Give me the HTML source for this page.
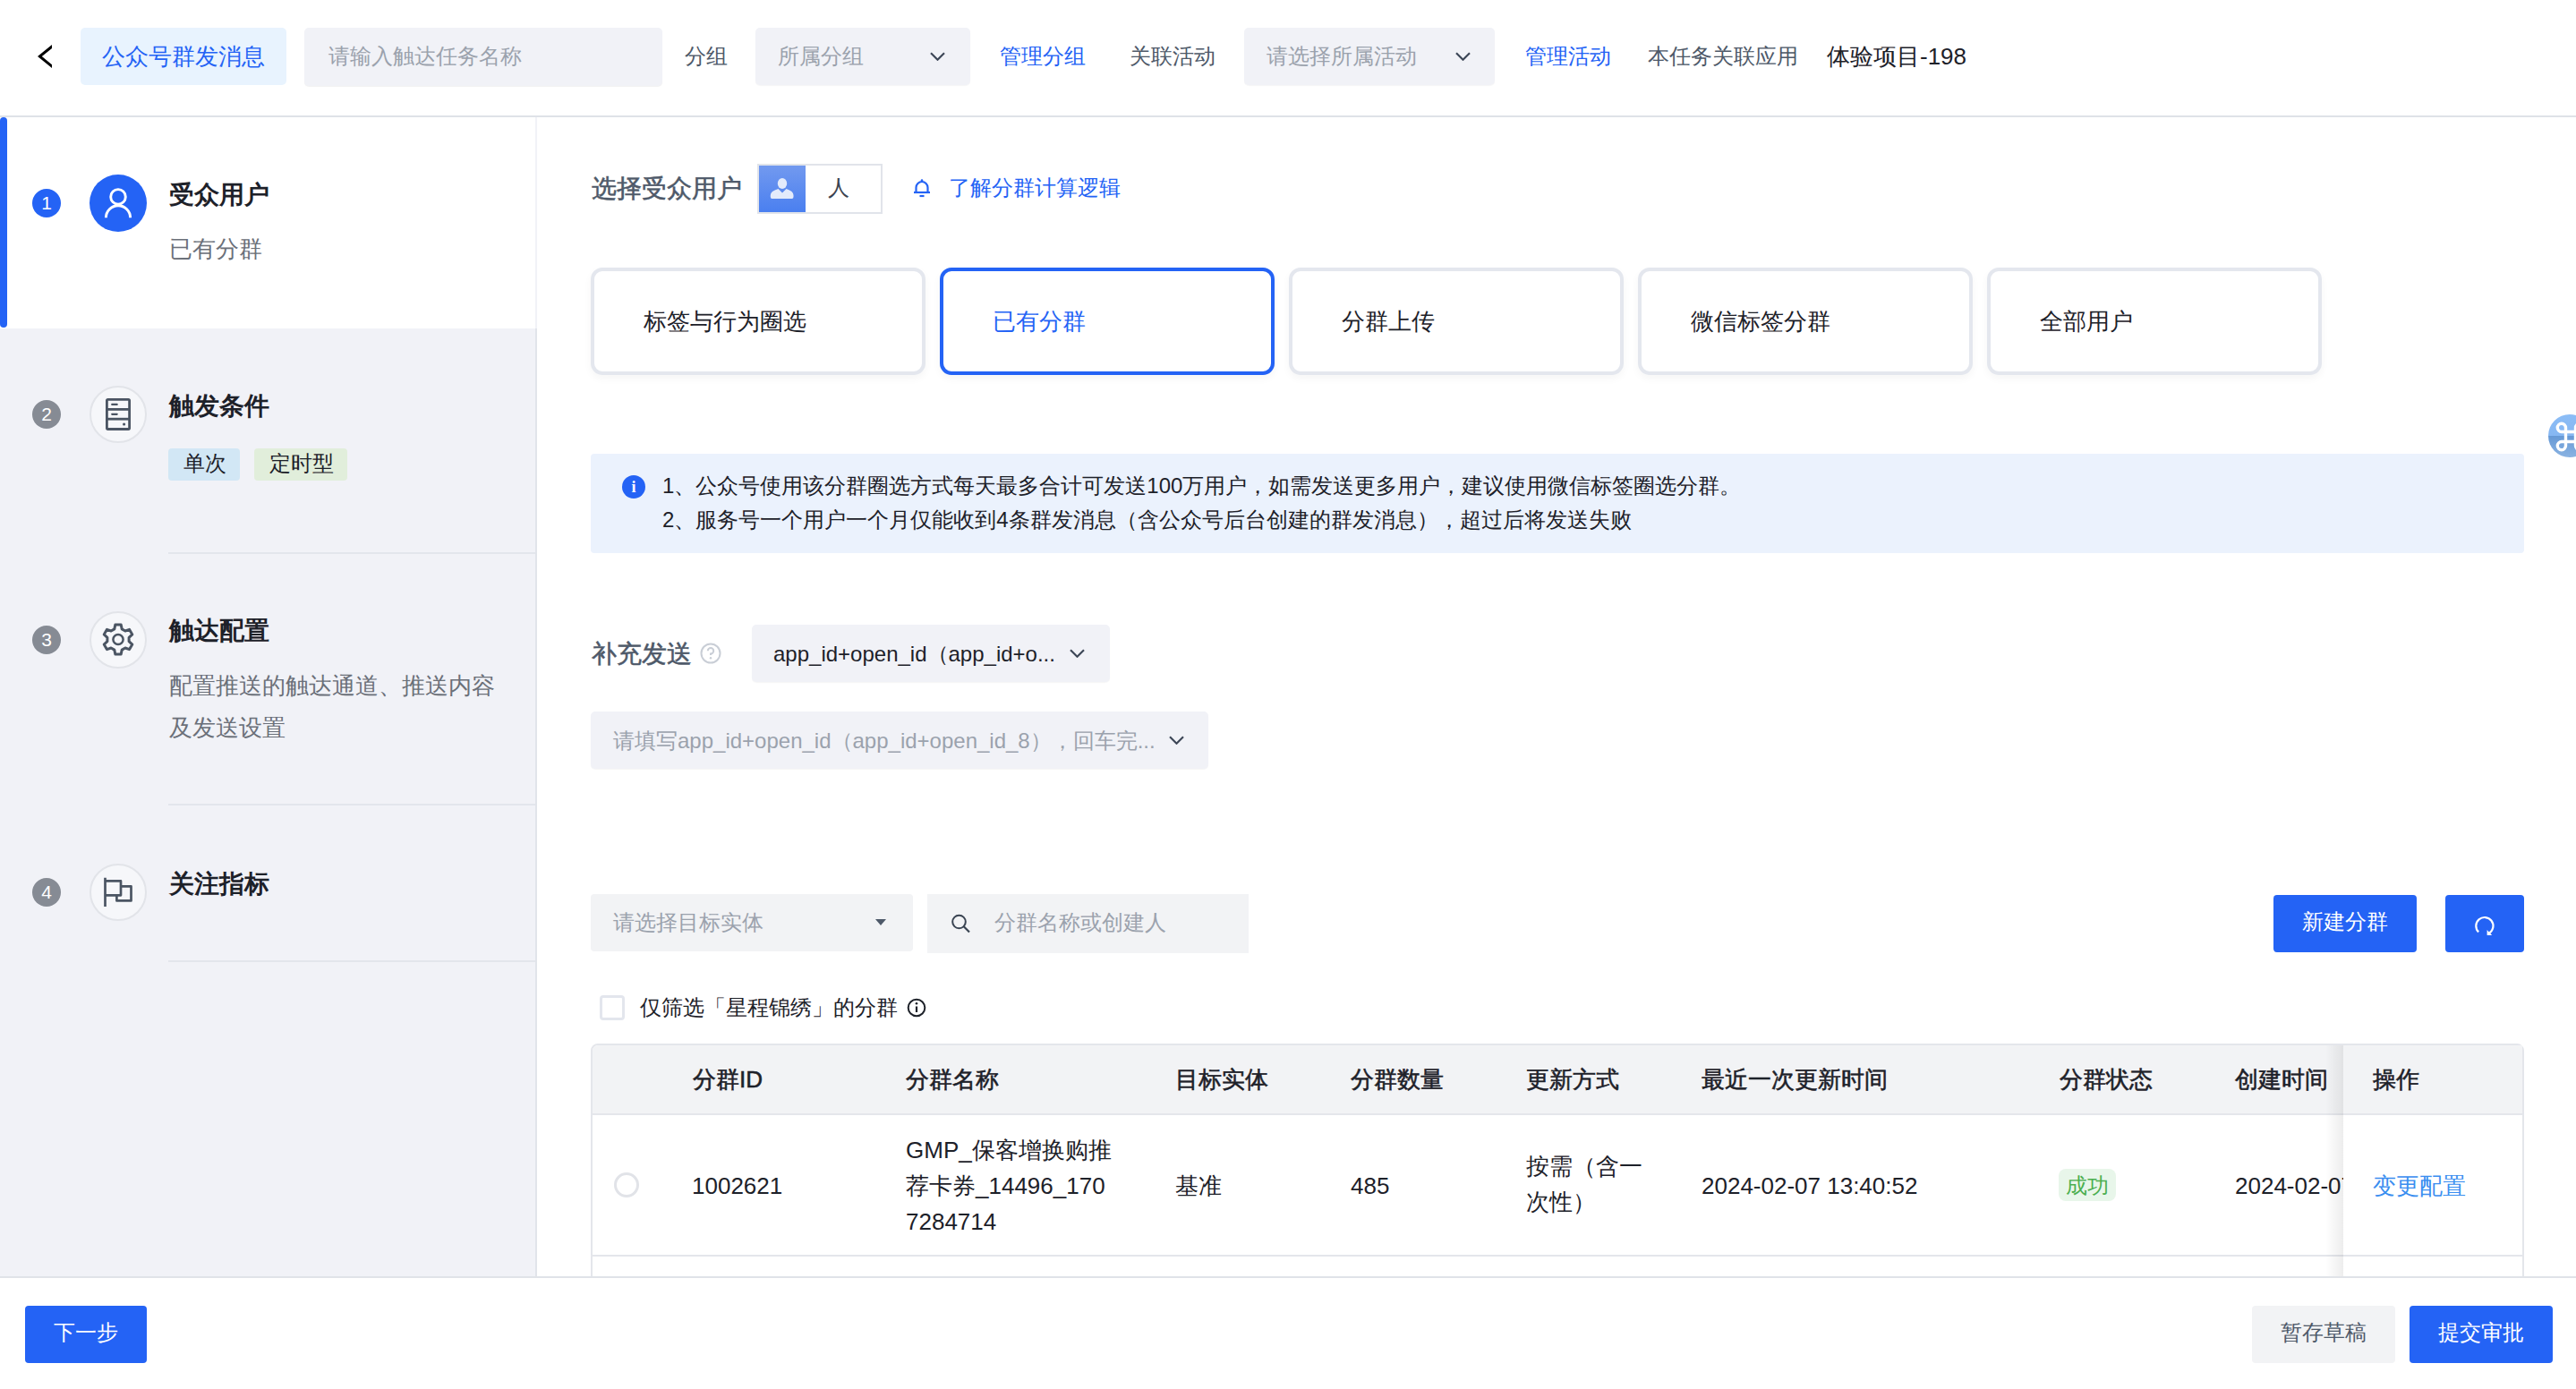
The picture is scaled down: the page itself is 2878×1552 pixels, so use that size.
<!DOCTYPE html>
<html><head><meta charset="utf-8">
<style>
*{box-sizing:border-box}
html,body{margin:0;padding:0}
body{width:2878px;height:1552px;overflow:hidden;position:relative;background:#fff;font-family:"Liberation Sans",sans-serif;color:#1d2129}
.a{position:absolute}
.t{position:absolute;white-space:nowrap;line-height:40px;font-size:24px}
.blue{color:#2463f5}
.g{color:#4e5969}
.ph{color:#9ba2ad}
.md{-webkit-text-stroke:0.55px currentColor}
.inp{position:absolute;background:#f1f2f7;border-radius:5px;box-shadow:0 1px 1px rgba(0,0,0,.04)}
.chev{position:absolute;width:17px;height:10px}
</style></head><body>

<!-- HEADER -->
<div class="a" style="left:0;top:129px;width:2878px;height:2px;background:#dfe2e8"></div>
<svg class="a" style="left:40px;top:48px" width="22" height="30" viewBox="0 0 22 30"><path d="M18 2.1 L18 6 L6.8 15.1 L18 24.2 L18 28.1 L2 15.1 Z" fill="#000"/></svg>
<div class="a" style="left:90px;top:31px;width:230px;height:64px;background:#e8f3fe;border-radius:5px"></div>
<div class="t blue" style="left:114px;top:43px;font-size:26px">公众号群发消息</div>
<div class="inp" style="left:340px;top:31px;width:400px;height:65px;box-shadow:0 1px 1px rgba(0,0,0,.06)"></div>
<div class="t ph" style="left:367px;top:43px">请输入触达任务名称</div>
<div class="t g" style="left:765px;top:43px">分组</div>
<div class="inp" style="left:844px;top:31px;width:240px;height:64px"></div>
<div class="t ph" style="left:869px;top:43px">所属分组</div>
<svg class="chev" style="left:1039px;top:58px" viewBox="0 0 17 10" style="overflow:visible"><path d="M1 1.2 L8.5 8.7 L16 1.2" fill="none" stroke="#3d4757" stroke-width="2.2"/></svg>
<div class="t blue" style="left:1117px;top:43px">管理分组</div>
<div class="t g" style="left:1262px;top:43px">关联活动</div>
<div class="inp" style="left:1390px;top:31px;width:280px;height:64px"></div>
<div class="t ph" style="left:1415px;top:43px">请选择所属活动</div>
<svg class="chev" style="left:1626px;top:58px" viewBox="0 0 17 10" style="overflow:visible"><path d="M1 1.2 L8.5 8.7 L16 1.2" fill="none" stroke="#3d4757" stroke-width="2.2"/></svg>
<div class="t blue" style="left:1704px;top:43px">管理活动</div>
<div class="t g" style="left:1841px;top:43px">本任务关联应用</div>
<div class="t" style="left:2041px;top:43px;color:#1d2129;font-size:26px">体验项目-198</div>

<!-- SIDEBAR -->
<div class="a" style="left:0;top:131px;width:600px;height:1296px;background:#f1f2f7"></div>
<div class="a" style="left:598px;top:367px;width:2px;height:1060px;background:#e1e4ea"></div>
<div class="a" style="left:0;top:131px;width:598px;height:236px;background:#fff"></div>
<div class="a" style="left:0;top:131px;width:8px;height:235px;background:#2463f5;border-radius:4px"></div>

<!-- steps -->
<div class="a" style="left:36px;top:211px;width:32px;height:32px;border-radius:50%;background:#2463f5;color:#fff;font-size:21px;line-height:32px;text-align:center">1</div>
<div class="a" style="left:100px;top:195px;width:64px;height:64px;border-radius:50%;background:#2463f5"></div>
<svg class="a" style="left:100px;top:195px" width="64" height="64" viewBox="0 0 64 64"><circle cx="32" cy="24.9" r="8.3" fill="none" stroke="#fff" stroke-width="2.9"/><path d="M18.4 48.3 A13.6 13.6 0 0 1 45.6 48.3" fill="none" stroke="#fff" stroke-width="3"/></svg>
<div class="t" style="left:189px;top:198px;font-size:28px;font-weight:bold">受众用户</div>
<div class="t" style="left:189px;top:257.5px;font-size:26px;color:#6b7079">已有分群</div>

<div class="a" style="left:36px;top:447px;width:32px;height:32px;border-radius:50%;background:#868b94;color:#fff;font-size:21px;line-height:32px;text-align:center">2</div>
<div class="a" style="left:100px;top:431px;width:64px;height:64px;border-radius:50%;background:#f6f7fa;border:2px solid #e2e4e9"></div>
<svg class="a" style="left:100px;top:431px" width="64" height="64" viewBox="0 0 64 64"><rect x="19.4" y="15.4" width="25.2" height="33.1" rx="1.2" fill="none" stroke="#4b5563" stroke-width="2.8"/><line x1="19.4" y1="26.4" x2="44.6" y2="26.4" stroke="#4b5563" stroke-width="2.8"/><line x1="19.4" y1="37.2" x2="44.6" y2="37.2" stroke="#4b5563" stroke-width="2.8"/><line x1="25.2" y1="20.9" x2="30.7" y2="20.9" stroke="#4b5563" stroke-width="2.2" stroke-linecap="round"/><line x1="25.2" y1="31.8" x2="30.7" y2="31.8" stroke="#4b5563" stroke-width="2.2" stroke-linecap="round"/><circle cx="38.6" cy="43" r="1.6" fill="#4b5563"/></svg>
<div class="t" style="left:189px;top:433.5px;font-size:28px;font-weight:bold">触发条件</div>
<div class="a" style="left:188px;top:501px;width:80px;height:36px;border-radius:4px;background:#d2e7f5"></div>
<div class="t" style="left:205px;top:498px;color:#1d2129">单次</div>
<div class="a" style="left:284px;top:501px;width:104px;height:36px;border-radius:4px;background:#e1eedb"></div>
<div class="t" style="left:301px;top:498px;color:#1d2129">定时型</div>
<div class="a" style="left:188px;top:617px;width:410px;height:2px;background:#e3e6ec"></div>

<div class="a" style="left:36px;top:699px;width:32px;height:32px;border-radius:50%;background:#868b94;color:#fff;font-size:21px;line-height:32px;text-align:center">3</div>
<div class="a" style="left:100px;top:683px;width:64px;height:64px;border-radius:50%;background:#f6f7fa;border:2px solid #e2e4e9"></div>
<svg class="a" style="left:100px;top:683px" width="64" height="64" viewBox="0 0 64 64"><g transform="translate(32 31.5)"><path id="gear" d="M-3.2 -16.5 L3.2 -16.5 L4.2 -11.6 L7.9 -9.5 L12.6 -11.1 L15.8 -5.6 L12.1 -2.2 L12.1 2.2 L15.8 5.6 L12.6 11.1 L7.9 9.5 L4.2 11.6 L3.2 16.5 L-3.2 16.5 L-4.2 11.6 L-7.9 9.5 L-12.6 11.1 L-15.8 5.6 L-12.1 2.2 L-12.1 -2.2 L-15.8 -5.6 L-12.6 -11.1 L-7.9 -9.5 L-4.2 -11.6 Z" fill="none" stroke="#4b5563" stroke-width="3" stroke-linejoin="round"/><circle r="5.6" fill="none" stroke="#4b5563" stroke-width="2.5"/></g></svg>
<div class="t" style="left:189px;top:685px;font-size:28px;font-weight:bold">触达配置</div>
<div class="t" style="left:189px;top:746px;font-size:26px;color:#6b7079">配置推送的触达通道、推送内容</div>
<div class="t" style="left:189px;top:792.5px;font-size:26px;color:#6b7079">及发送设置</div>
<div class="a" style="left:188px;top:898px;width:410px;height:2px;background:#e3e6ec"></div>

<div class="a" style="left:36px;top:981px;width:32px;height:32px;border-radius:50%;background:#868b94;color:#fff;font-size:21px;line-height:32px;text-align:center">4</div>
<div class="a" style="left:100px;top:965px;width:64px;height:64px;border-radius:50%;background:#f6f7fa;border:2px solid #e2e4e9"></div>
<svg class="a" style="left:100px;top:965px" width="64" height="64" viewBox="0 0 64 64"><path d="M17.5 48 L17.5 15.8 M17.5 19.4 L35 19.4 L35 35.3 L17.5 35.3 M35 25.4 L46.5 25.4 L46.5 41.4 L30.4 41.4 L30.4 35.3" fill="none" stroke="#4b5563" stroke-width="2.7" stroke-linejoin="round"/></svg>
<div class="t" style="left:189px;top:968px;font-size:28px;font-weight:bold">关注指标</div>
<div class="a" style="left:188px;top:1073px;width:410px;height:2px;background:#e3e6ec"></div>

<!-- MAIN -->
<div class="t g md" style="left:661px;top:191px;font-size:28px;color:#4e5969">选择受众用户</div>
<div class="a" style="left:846px;top:183px;width:140px;height:56px;border:2px solid #e1e4ea;background:#fff"></div>
<div class="a" style="left:848px;top:185px;width:52px;height:52px;background:linear-gradient(#7299ef,#4a7ff0)"></div>
<svg class="a" style="left:848px;top:185px" width="52" height="52" viewBox="0 0 52 52"><ellipse cx="26" cy="20" rx="5.2" ry="6.1" fill="#e3ebfb"/><path d="M14.5 37 Q12.8 37 12.8 35 L12.8 33 Q12.8 28.5 21.5 26 L26 30.5 L30.5 26 Q38.5 28.5 38.5 33 L38.5 35 Q38.5 37 36.8 37 Z" fill="#e3ebfb"/></svg>
<div class="t" style="left:925px;top:190px;color:#3b4350">人</div>
<svg class="a" style="left:1018px;top:198px" width="24" height="24" viewBox="0 0 24 24"><path d="M5.5 17 L5.5 11.5 A6.5 6.5 0 0 1 18.5 11.5 L18.5 17" fill="none" stroke="#2463f5" stroke-width="2.2"/><line x1="3" y1="17" x2="21" y2="17" stroke="#2463f5" stroke-width="2.2"/><line x1="9.5" y1="21" x2="14.5" y2="21" stroke="#2463f5" stroke-width="2.2"/><circle cx="12" cy="3.6" r="1.3" fill="#2463f5"/></svg>
<div class="t blue" style="left:1060px;top:190px">了解分群计算逻辑</div>

<!-- cards -->
<div class="a" style="left:660px;top:299px;width:374px;height:120px;border:4px solid #e4e7ee;border-radius:13px;box-shadow:0 4px 10px rgba(0,0,0,.04)"></div>
<div class="t" style="left:719px;top:338.5px;font-size:26px">标签与行为圈选</div>
<div class="a" style="left:1050px;top:299px;width:374px;height:120px;border:4px solid #2463f5;border-radius:13px;box-shadow:0 4px 10px rgba(0,0,0,.04)"></div>
<div class="t blue" style="left:1109px;top:338.5px;font-size:26px">已有分群</div>
<div class="a" style="left:1440px;top:299px;width:374px;height:120px;border:4px solid #e4e7ee;border-radius:13px;box-shadow:0 4px 10px rgba(0,0,0,.04)"></div>
<div class="t" style="left:1499px;top:338.5px;font-size:26px">分群上传</div>
<div class="a" style="left:1830px;top:299px;width:374px;height:120px;border:4px solid #e4e7ee;border-radius:13px;box-shadow:0 4px 10px rgba(0,0,0,.04)"></div>
<div class="t" style="left:1889px;top:338.5px;font-size:26px">微信标签分群</div>
<div class="a" style="left:2220px;top:299px;width:374px;height:120px;border:4px solid #e4e7ee;border-radius:13px;box-shadow:0 4px 10px rgba(0,0,0,.04)"></div>
<div class="t" style="left:2279px;top:338.5px;font-size:26px">全部用户</div>

<!-- floating shortcut -->
<div class="a" style="left:2847px;top:463px;width:48px;height:48px;border-radius:50%;background:linear-gradient(#8cbdf6 0%,#86b7f2 50%,#6699d6 50%,#8ab3e2 100%)"></div>
<svg class="a" style="left:2847.5px;top:463.7px" width="48" height="48" viewBox="0 0 48 48"><path d="M18.5 13.9 L18.5 34.1 A4.6 4.6 0 1 1 13.9 29.5 L34.1 29.5 A4.6 4.6 0 1 1 29.5 34.1 L29.5 13.9 A4.6 4.6 0 1 1 34.1 18.5 L13.9 18.5 A4.6 4.6 0 1 1 18.5 13.9 Z" fill="none" stroke="#fff" stroke-width="3.4"/></svg>

<!-- alert -->
<div class="a" style="left:660px;top:507px;width:2160px;height:111px;background:#ebf2fd;border-radius:4px"></div>
<div class="a" style="left:695px;top:531px;width:26px;height:26px;border-radius:50%;background:#2463f5;color:#fff;font-size:18px;line-height:26px;text-align:center;font-weight:bold;font-family:'Liberation Serif',serif">i</div>
<div class="t" style="left:740px;top:523px">1、公众号使用该分群圈选方式每天最多合计可发送100万用户，如需发送更多用户，建议使用微信标签圈选分群。</div>
<div class="t" style="left:740px;top:561px">2、服务号一个用户一个月仅能收到4条群发消息（含公众号后台创建的群发消息），超过后将发送失败</div>

<!-- supplement -->
<div class="t md" style="left:661px;top:711px;font-size:28px;color:#4e5969">补充发送</div>
<svg class="a" style="left:782px;top:718px" width="24" height="24" viewBox="0 0 24 24"><circle cx="12" cy="12" r="10.5" fill="none" stroke="#c9ced6" stroke-width="2"/><path d="M8.8 9.3 A3.2 3.2 0 1 1 12 12.5 L12 14" fill="none" stroke="#c9ced6" stroke-width="2"/><circle cx="12" cy="17.3" r="1.2" fill="#c9ced6"/></svg>
<div class="inp" style="left:840px;top:698px;width:400px;height:64px"></div>
<div class="t" style="left:864px;top:711px">app_id+open_id（app_id+o...</div>
<svg class="chev" style="left:1195px;top:725px" viewBox="0 0 17 10" style="overflow:visible"><path d="M1 1.2 L8.5 8.7 L16 1.2" fill="none" stroke="#3d4757" stroke-width="2.2"/></svg>
<div class="inp" style="left:660px;top:795px;width:690px;height:64px"></div>
<div class="t ph" style="left:685px;top:808px">请填写app_id+open_id（app_id+open_id_8），回车完...</div>
<svg class="chev" style="left:1306px;top:822px" viewBox="0 0 17 10" style="overflow:visible"><path d="M1 1.2 L8.5 8.7 L16 1.2" fill="none" stroke="#3d4757" stroke-width="2.2"/></svg>

<!-- filters -->
<div class="a" style="left:660px;top:999px;width:360px;height:64px;background:#f2f3f5;border-radius:4px"></div>
<div class="t ph" style="left:685px;top:1011px">请选择目标实体</div>
<svg class="a" style="left:977px;top:1026px" width="14" height="9" viewBox="0 0 14 9"><path d="M1 1 L13 1 L7 8 Z" fill="#4e5969"/></svg>
<div class="a" style="left:1036px;top:999px;width:359px;height:66px;background:#f2f3f5"></div>
<svg class="a" style="left:1061px;top:1020px" width="26" height="26" viewBox="0 0 26 26"><circle cx="10.5" cy="10" r="7.3" fill="none" stroke="#3a4452" stroke-width="2"/><line x1="15.8" y1="15.3" x2="22" y2="21.5" stroke="#3a4452" stroke-width="2.2"/></svg>
<div class="t ph" style="left:1111px;top:1011px">分群名称或创建人</div>
<div class="a" style="left:2540px;top:1000px;width:160px;height:64px;background:#2463f5;border-radius:4px"></div>
<div class="t" style="left:2572px;top:1010px;color:#fff">新建分群</div>
<div class="a" style="left:2732px;top:1000px;width:88px;height:64px;background:#2463f5;border-radius:4px"></div>
<svg class="a" style="left:2763px;top:1020px" width="26" height="26" viewBox="0 0 26 26"><path d="M6.1 21.4 A9.6 9.6 0 1 1 18.2 22.6" fill="none" stroke="#fff" stroke-width="2.2"/><path d="M15.6 19 L15.6 24.9 L21.2 24.9 Z" fill="#fff"/></svg>

<div class="a" style="left:670px;top:1112px;width:28px;height:28px;border:3.5px solid #e3e6ed;border-radius:4px;background:#fff"></div>
<div class="t" style="left:715px;top:1105.5px">仅筛选「星程锦绣」的分群</div>
<svg class="a" style="left:1013px;top:1115px" width="22" height="22" viewBox="0 0 22 22"><circle cx="11" cy="11" r="9.3" fill="none" stroke="#1d2129" stroke-width="2"/><line x1="11" y1="9.5" x2="11" y2="16" stroke="#1d2129" stroke-width="2.2"/><circle cx="11" cy="6.3" r="1.3" fill="#1d2129"/></svg>

<!-- TABLE -->
<div class="a" style="left:660px;top:1166px;width:2160px;height:301px;border:2px solid #e4e6eb;border-radius:8px 8px 0 0;background:#fff;overflow:hidden">
  <div class="a" style="left:0;top:0;width:2160px;height:77px;background:#f2f3f5"></div>
  <div class="a" style="left:0;top:76px;width:2160px;height:2px;background:#e4e6eb"></div>
  <div class="a" style="left:0;top:234px;width:2160px;height:2px;background:#e4e6eb"></div>
</div>
<div class="t md" style="left:774px;top:1186px;font-size:26px">分群ID</div>
<div class="t md" style="left:1012px;top:1186px;font-size:26px">分群名称</div>
<div class="t md" style="left:1313px;top:1186px;font-size:26px">目标实体</div>
<div class="t md" style="left:1509px;top:1186px;font-size:26px">分群数量</div>
<div class="t md" style="left:1705px;top:1186px;font-size:26px">更新方式</div>
<div class="t md" style="left:1901px;top:1186px;font-size:26px">最近一次更新时间</div>
<div class="t md" style="left:2301px;top:1186px;font-size:26px">分群状态</div>
<div class="t md" style="left:2497px;top:1186px;font-size:26px">创建时间</div>

<div class="a" style="left:686px;top:1310px;width:28px;height:28px;border-radius:50%;border:3px solid #e1e3e8;background:#fff"></div>
<div class="t" style="left:773px;top:1305px;font-size:26px">1002621</div>
<div class="t" style="left:1012px;top:1265px;font-size:26px">GMP_保客增换购推</div>
<div class="t" style="left:1012px;top:1305px;font-size:26px">荐卡券_14496_170</div>
<div class="t" style="left:1012px;top:1345px;font-size:26px">7284714</div>
<div class="t" style="left:1313px;top:1305px;font-size:26px">基准</div>
<div class="t" style="left:1509px;top:1305px;font-size:26px">485</div>
<div class="t" style="left:1705px;top:1283px;font-size:26px">按需（含一</div>
<div class="t" style="left:1705px;top:1323px;font-size:26px">次性）</div>
<div class="t" style="left:1901px;top:1305px; font-size:26px">2024-02-07 13:40:52</div>
<div class="a" style="left:2300px;top:1306px;width:64px;height:36px;border-radius:8px;background:#e8f6ea"></div>
<div class="t" style="left:2308px;top:1305px;color:#4caf50">成功</div>
<div class="a" style="left:2497px;top:1305px;width:121px;height:40px;overflow:hidden"><div class="t" style="left:0;top:0;font-size:26px">2024-02-07 13:40:52</div></div>

<!-- fixed column -->
<div class="a" style="left:2598px;top:1168px;width:20px;height:259px;background:linear-gradient(to right,rgba(0,0,0,0),rgba(0,0,0,.07))"></div>
<div class="a" style="left:2618px;top:1168px;width:200px;height:76px;background:#f2f3f5"></div>
<div class="a" style="left:2618px;top:1246px;width:200px;height:156px;background:#fff"></div>
<div class="a" style="left:2618px;top:1404px;width:200px;height:22px;background:#fff"></div>
<div class="t md" style="left:2651px;top:1186px;font-size:26px">操作</div>
<div class="t" style="left:2651px;top:1305px;color:#3a8ef0;font-size:26px">变更配置</div>

<!-- FOOTER -->
<div class="a" style="left:0;top:1426px;width:2878px;height:126px;background:#fff;border-top:2px solid #e0e3e8"></div>
<div class="a" style="left:28px;top:1459px;width:136px;height:64px;background:#2463f5;border-radius:4px"></div>
<div class="t" style="left:60px;top:1469px;color:#fff">下一步</div>
<div class="a" style="left:2516px;top:1459px;width:160px;height:64px;background:#f2f3f5;border-radius:4px"></div>
<div class="t" style="left:2548px;top:1469px;color:#4e5969">暂存草稿</div>
<div class="a" style="left:2692px;top:1459px;width:160px;height:64px;background:#2463f5;border-radius:4px"></div>
<div class="t" style="left:2724px;top:1469px;color:#fff">提交审批</div>

</body></html>
